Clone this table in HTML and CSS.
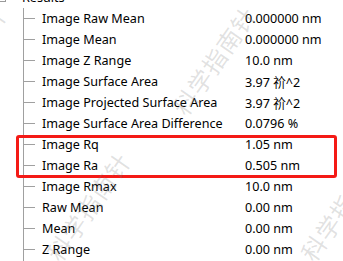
FILE: index.html
```html
<!DOCTYPE html>
<html>
<head>
<meta charset="utf-8">
<link rel="stylesheet" href="styles.css">
</head>
<body>
<div class="page">
  <div class="root">
    <span class="box"></span>
    <span class="root-label">Results</span>
  </div>
  <div class="tree">
    <div class="row"><span class="branch"></span><span class="name">Image Raw Mean</span><span class="value">0.000000 nm</span></div>
    <div class="row"><span class="branch"></span><span class="name">Image Mean</span><span class="value">0.000000 nm</span></div>
    <div class="row"><span class="branch"></span><span class="name">Image Z Range</span><span class="value">10.0 nm</span></div>
    <div class="row"><span class="branch"></span><span class="name">Image Surface Area</span><span class="value">3.97 祄^2</span></div>
    <div class="row"><span class="branch"></span><span class="name">Image Projected Surface Area</span><span class="value">3.97 祄^2</span></div>
    <div class="row"><span class="branch"></span><span class="name">Image Surface Area Difference</span><span class="value">0.0796 %</span></div>
    <div class="row"><span class="branch"></span><span class="name">Image Rq</span><span class="value">1.05 nm</span></div>
    <div class="row"><span class="branch"></span><span class="name">Image Ra</span><span class="value">0.505 nm</span></div>
    <div class="row"><span class="branch"></span><span class="name">Image Rmax</span><span class="value">10.0 nm</span></div>
    <div class="row"><span class="branch"></span><span class="name">Raw Mean</span><span class="value">0.00 nm</span></div>
    <div class="row"><span class="branch"></span><span class="name">Mean</span><span class="value">0.00 nm</span></div>
    <div class="row"><span class="branch"></span><span class="name">Z Range</span><span class="value">0.00 nm</span></div>
  </div>
  <div class="highlight"></div>
  <span class="wm wm1">科学指南针</span>
  <span class="wm wm2">科学指南针</span>
  <span class="wm wm3">科学指南针</span>
  <span class="wm wm4">科学指南针</span>
</div>
</body>
</html>
```
FILE: styles.css
```css
html, body {
  margin: 0;
  padding: 0;
  background: #ffffff;
}
.page {
  position: relative;
  width: 343px;
  height: 261px;
  overflow: hidden;
  font-family: "Noto Sans", "Noto Sans CJK SC", sans-serif;
  font-size: 12.6px;
  color: #000;
}
.root {
  display: flex;
  align-items: center;
  height: 21px;
  margin-top: -13px;
}
.box {
  width: 9px;
  height: 9px;
  margin-left: -3px;
  border: 1px solid #9a9a9a;
  box-sizing: border-box;
}
.root-label {
  margin-left: 16px;
}
.tree {
  margin-left: 23px;
  border-left: 1px solid #a0a0a0;
  height: 300px;
}
.row {
  display: flex;
  align-items: center;
  height: 21px;
  white-space: nowrap;
}
.branch {
  width: 11px;
  height: 1px;
  background: #a0a0a0;
  flex: none;
}
.name {
  margin-left: 7px;
  width: 203px;
  flex: none;
}
.value {
  flex: none;
}
.highlight {
  position: absolute;
  left: 16px;
  top: 135px;
  width: 321px;
  height: 43px;
  border: 3px solid #f41a16;
  border-radius: 3px;
  box-sizing: border-box;
}
.wm {
  position: absolute;
  font-family: "Noto Sans CJK SC", sans-serif;
  font-size: 24px;
  color: rgba(120, 120, 120, 0.22);
  transform: rotate(-55deg);
  transform-origin: left center;
  white-space: nowrap;
  letter-spacing: 1px;
}
.wm1 { left: 52px; top: 240px; }
.wm2 { left: 178px; top: 94px; }
.wm3 { left: -72px; top: 94px; }
.wm4 { left: 306px; top: 240px; }
```
